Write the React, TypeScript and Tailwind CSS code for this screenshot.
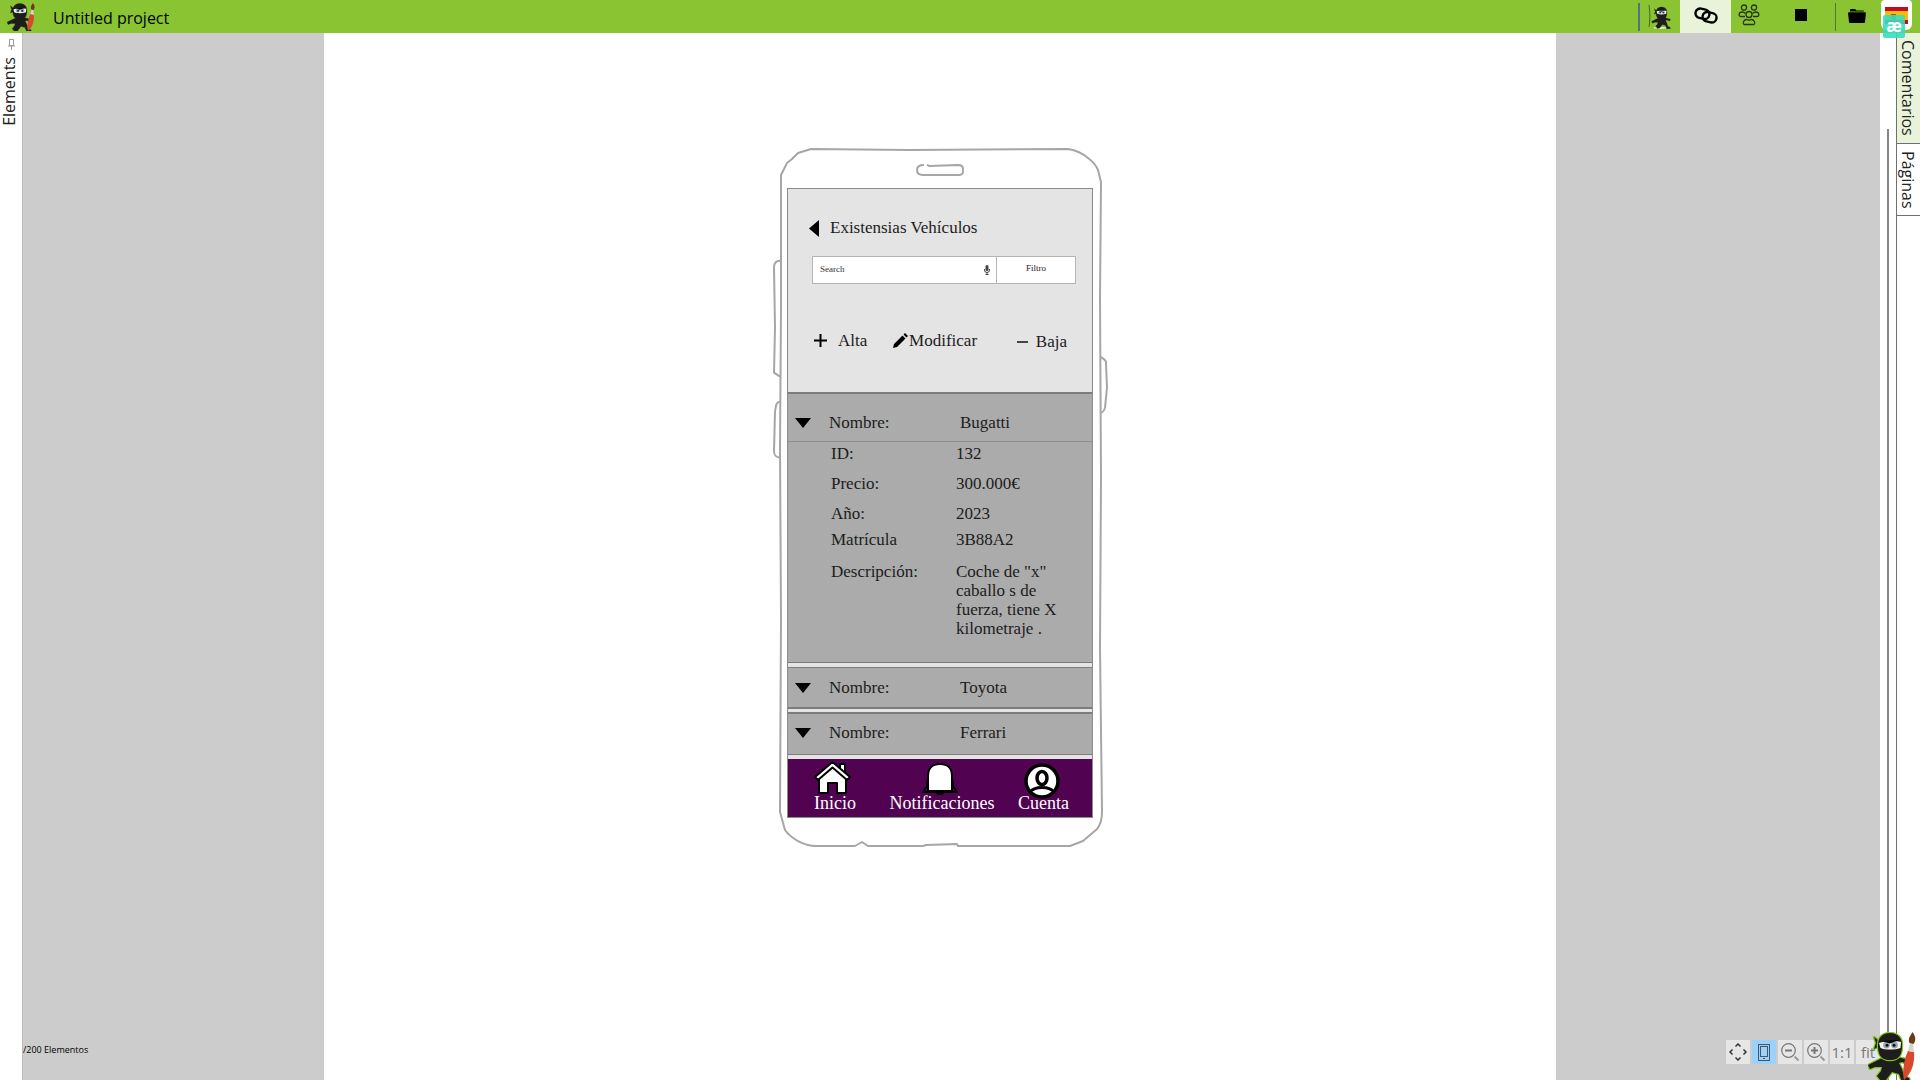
import React from "react";

type NinjaProps = { className?: string; tool: "brush" | "staff"; outline?: boolean };

function Ninja({ className, tool, outline }: NinjaProps) {
  return (
    <svg viewBox="0 0 48 48" className={className} aria-hidden="true">
      {tool === "staff" ? (
        <>
          <path d="M2 2c2 14 2 30 0 42" fill="none" stroke="#4b6a1c" strokeWidth="2" />
          <ellipse cx="24" cy="46" rx="14" ry="1.8" fill="#e3f0c8" />
        </>
      ) : null}
      <g transform={tool === "staff" ? "translate(7 5) scale(.86)" : undefined}>
        <g
          fill="#1d1d1b"
          stroke={outline ? "#7fc31c" : "#1d1d1b"}
          strokeWidth={outline ? 2.4 : 0.6}
          strokeLinejoin="round"
          style={{ paintOrder: "stroke" }}
        >
          <path d="M11 9 6 5l2 6-2 6 6-3z" />
          <path d="M14 26 6 30 0 33l2 4 5-2 7 0-1 4-4 5 4 5 5-1 6-8 7 2 3 8 8-1-1-3-5-2-2-7-3-6 3-1 6 2 2-4-9-2-6-2z" />
          <path d="M22 1c8 0 12 5 12 12s-1 15-12 15S10 20 10 13 14 1 22 1z" />
        </g>
        <path d="M11 11c5-2 15-3 22-1l-.5 6c-6 2-15 2-20 0z" fill="#f7f3ea" />
        <circle cx="18.500" cy="13" r="3.400" fill="#8fa8b8" />
        <circle cx="26.500" cy="13" r="3.400" fill="#8fa8b8" />
        <circle cx="19" cy="13.300" r="1.500" fill="#111" />
        <circle cx="26" cy="13.300" r="1.500" fill="#111" />
        <path d="m14 9 8 2.500L31 8z" />
      </g>
      {tool === "brush" ? (
        <>
          <path d="M36 48c-2-8 0-21 4-29l6 1c1 10-2 21-10 28z" fill="#d9482b" />
          <path d="M40 19l2-8 3 1 1 8z" fill="#d8d4cc" />
          <path d="M41.500 11c-2-5 1-7 3-11 3 4 4 8 1 12z" fill="#6b3a16" />
        </>
      ) : null}
    </svg>
  );
}

function LinkIcon() {
  return (
    <svg viewBox="0 0 24 17" className="h-[17px] w-6" fill="none" stroke="#000" strokeWidth="2.400" aria-hidden="true">
      <rect x="1.500" y="2" width="14" height="9.500" rx="4.750" transform="rotate(12 8.500 6.500)" />
      <rect x="8.500" y="5.500" width="14" height="9.500" rx="4.750" transform="rotate(12 15.500 10.500)" />
    </svg>
  );
}

function PeopleIcon() {
  return (
    <svg viewBox="0 0 22 22" className="size-[22px]" fill="none" stroke="#23360a" strokeWidth="1.300" aria-hidden="true">
      <circle cx="6" cy="3.600" r="2.600" />
      <circle cx="16" cy="3.600" r="2.600" />
      <circle cx="11" cy="10.500" r="3" />
      <path d="M7 12.500H2.500C.5 12.500.5 8 4 8c1.500 0 2.500.5 3.500 1.500M15 12.500h4.500c2 0 2-4.500-1.500-4.500-1.500 0-2.500.5-3.500 1.500" />
      <path d="M6 20.500c-2-1.500 0-5 2.500-5 1 .8 4 .8 5 0 2.500 0 4.500 3.500 2.500 5z" />
    </svg>
  );
}

function PhoneFrame() {
  return (
    <svg
      viewBox="0 0 320 700"
      preserveAspectRatio="none"
      className="absolute inset-0 size-full overflow-visible"
      fill="none"
      stroke="#a6a6a6"
      strokeWidth="2"
      strokeLinejoin="round"
      aria-hidden="true"
    >
      <path d="M1 27 7 15 12 11 18 5 31 1 130 2 288 1Q300 3 308 10 315 15 318 22L321 34 320 150 321 330 320 500 322 665Q322 676 317 682L303 694 290 699 178 699 177 697 146 698 143 699 88 699 82 695 75 699 35 699Q25 698 18 694 9 689 5 683L0 665 1 470 0 300 1 160Z" />
      <path d="M144 17c-4 0-7 1-7 5s2 5 6 5h36c4 0 4-2 4-6 0-3-2-4-5-4l-29 1-2-1" />
      <path d="M0 113c-4 0-6 3-6 7l1 60-1 45 6 4" />
      <path d="M0 254c-4 0-4 4-5 10l-1 40c0 4 3 6 6 6" />
      <path d="M320 209c3 2 7 3 6 7l1 24-2 20c-1 4-2 5-5 5" />
    </svg>
  );
}

function DownTriangle() {
  return (
    <svg viewBox="0 0 16 10" className="mt-[5px] h-2.5 w-4" aria-hidden="true">
      <path d="M0 0h16L8 10z" />
    </svg>
  );
}

function VehicleHeader({ name }: { name: string }) {
  return (
    <button type="button" className="grid w-full grid-cols-[34px_131px_1fr] pl-[7px] text-left leading-5">
      <DownTriangle />
      <span>Nombre:</span>
      <span>{name}</span>
    </button>
  );
}

const details = [
  { label: "ID:", value: "132", space: "pb-2.5" },
  { label: "Precio:", value: "300.000€", space: "pb-2.5" },
  { label: "Año:", value: "2023", space: "pb-1.5" },
  { label: "Matrícula", value: "3B88A2", space: "pb-3" },
  { label: "Descripción:", value: 'Coche de "x" caballo s de fuerza, tiene X kilometraje .', space: "pb-0" },
];

function HouseIcon() {
  return (
    <svg viewBox="0 0 37 33" className="h-[33px] w-[37px]" fill="#fff" stroke="#000" strokeWidth="2" strokeLinejoin="round" aria-hidden="true">
      <path d="M26 3h5v10l-5-5z" />
      <path d="M5 16v16h9V22h9v10h9V16L18.500 4z" />
      <path d="M18.500 1 1 16l3 3L18.500 6.500 33 19l3-3z" />
    </svg>
  );
}

function BellIcon() {
  return (
    <svg viewBox="0 0 36 34" className="mt-0.5 mr-1 h-[34px] w-9" stroke="#000" strokeWidth="2" strokeLinejoin="round" aria-hidden="true">
      <path d="M14 29a4.500 4 0 0 0 8 0z" fill="#555" />
      <path d="M6 14 5 23 1 29h34l-4-6-1-9z" fill="#510352" />
      <path d="M6 28V13C6 5 11 1 18 1s12 4 12 12v15z" fill="#fff" />
    </svg>
  );
}

function AccountIcon() {
  return (
    <svg viewBox="0 0 36 36" className="mt-0.5 mr-1 size-9" fill="#fff" stroke="#000" strokeWidth="3.500" aria-hidden="true">
      <circle cx="18" cy="18" r="16" />
      <ellipse cx="18" cy="15" rx="5" ry="6.500" />
      <path d="M6 29c5-6 19-6 24 0" strokeWidth="3" />
    </svg>
  );
}

function PhoneMockup() {
  return (
    <div className="relative w-80 px-[7px] pt-10 pb-[29px]">
      <PhoneFrame />
      <div className="relative border border-[#8c8c8c] bg-[#e4e4e4] font-['Liberation_Serif',serif] text-[17px] text-[#1c1c1c]">
        <section className="h-[203px] pt-[29px]">
          <div className="flex items-center pl-[21px] leading-5">
            <button type="button" aria-label="Volver" className="w-[21px]">
              <svg viewBox="0 0 10 17" className="h-[17px] w-2.5" aria-hidden="true">
                <path d="M10 0v17L0 8.500z" fill="#000" />
              </svg>
            </button>
            <h1>Existensias Vehículos</h1>
          </div>
          <form className="mt-[18px] mr-4 ml-6 flex h-7 border border-[#b5b5b5] bg-white text-[9px]">
            <div className="flex flex-1 items-center pr-1.5 pl-[7px]">
              <input
                type="text"
                aria-label="Search"
                placeholder="Search"
                className="w-full min-w-0 flex-1 outline-none placeholder:text-[#333]"
              />
              <svg viewBox="0 0 6 10" className="h-2.5 w-1.5" aria-hidden="true">
                <rect x="1.500" width="3" height="6" rx="1.500" fill="#444" />
                <path d="M.5 4v1a2.500 2.500 0 0 0 5 0V4M3 7.500V10M1.500 9.500h3" fill="none" stroke="#444" />
              </svg>
            </div>
            <button type="button" className="w-[79px] border-l border-[#b5b5b5] pb-0.5">Filtro</button>
          </form>
          <div className="mt-[45px] flex items-center justify-between pr-[25px] pl-[26px] leading-5">
            <button type="button" className="flex items-center gap-[11px]">
              <svg viewBox="0 0 13 13" className="size-[13px]" aria-hidden="true">
                <path d="M6.500 0v13M0 6.500h13" stroke="#000" strokeWidth="2" />
              </svg>
              Alta
            </button>
            <button type="button" className="mr-3.5 flex items-center gap-px">
              <svg viewBox="0 0 15 15" className="size-[15px]" aria-hidden="true">
                <path d="m0 15 1-4L9.500 2.500l3 3L4 14zM10.500 1.500 12 0l3 3-1.500 1.500z" />
              </svg>
              Modificar
            </button>
            <button type="button" className="flex items-center gap-2 pt-[3px]">
              <svg viewBox="0 0 11 2" className="h-0.5 w-[11px]" aria-hidden="true">
                <path d="M0 1h11" stroke="#444" strokeWidth="2" />
              </svg>
              Baja
            </button>
          </div>
        </section>
        <section className="border-t-2 border-b border-[#7c7c7c] bg-[#ababab]">
          <div className="border-b border-[#8f8f8f] pt-[19px] pb-2">
            <VehicleHeader name="Bugatti" />
          </div>
          <dl className="pt-px pb-6 pl-[43px]">
            {details.map((d) => (
              <div key={d.label} className={"grid grid-cols-[125px_110px] leading-[19px] " + d.space}>
                <dt className="pt-px">{d.label}</dt>
                <dd className="pt-px">{d.value}</dd>
              </div>
            ))}
          </dl>
        </section>
        <section className="mt-1 flex h-[42px] items-center border-t border-b-2 border-[#7c7c7c] bg-[#ababab]">
          <VehicleHeader name="Toyota" />
        </section>
        <section className="mt-[3px] flex h-[43px] items-center border-t-2 border-b border-[#7c7c7c] bg-[#ababab] pb-0.5">
          <VehicleHeader name="Ferrari" />
        </section>
        <nav className="mt-1 -mb-px flex justify-between border-b border-[#8c8c8c] bg-[#510352] pt-0.5 pr-[23px] pb-1 pl-[26px] text-lg leading-5 text-white">
          <a href="#inicio" className="flex flex-col">
            <HouseIcon />
            <span className="relative -mt-px">Inicio</span>
          </a>
          <a href="#notificaciones" className="ml-2.5 flex flex-col items-center">
            <BellIcon />
            <span className="relative -mt-1">Notificaciones</span>
          </a>
          <a href="#cuenta" className="flex flex-col items-center">
            <AccountIcon />
            <span className="relative -mt-1.5">Cuenta</span>
          </a>
        </nav>
      </div>
    </div>
  );
}

function Header() {
  return (
    <header className="flex h-[33px] shrink-0 items-center bg-[#8ac433] pl-[7px]">
      <Ninja tool="brush" className="size-7" />
      <span className="ml-[18px] flex-1 pt-0.5 text-base leading-6">Untitled project</span>
      <span className="h-7 w-0.5 bg-[#4f7680]" />
      <button type="button" aria-label="Ninja" className="flex w-10 justify-center">
        <Ninja tool="staff" className="size-[25px]" />
      </button>
      <button type="button" aria-label="Enlaces" className="flex h-full w-[51px] items-center justify-center bg-[#e8f3da] pb-0.5">
        <LinkIcon />
      </button>
      <button type="button" aria-label="Equipo" className="flex w-9 justify-center pb-1">
        <PeopleIcon />
      </button>
      <button type="button" aria-label="Detener" className="flex h-full w-[68px] items-center justify-center pb-[3px]">
        <span className="size-3 bg-black" />
      </button>
      <span className="h-7 w-px bg-[#4f7a30]" />
      <button type="button" aria-label="Abrir" className="flex w-[45px] justify-center pr-[3px] pb-0.5">
        <svg viewBox="0 0 18 14" className="h-3.5 w-[18px]" aria-hidden="true">
          <path d="M2 2.500V1q0-1 1-1h4l1.500 1.500H15q1 0 1 1zM0 4q0-.8 1-.8h16q1 0 .9.800L17 13q0 1-1 1H2q-1 0-1-1z" />
        </svg>
      </button>
      <button type="button" aria-label="Idioma" className="relative z-10 mr-2 flex h-[30px] w-[31px] justify-center self-start rounded-b-md rounded-t-sm bg-white pt-[7px]">
        <svg viewBox="0 0 23 17" className="h-[17px] w-[23px]" aria-hidden="true">
          <path d="M0 0h23v17H0z" fill="#f8bd00" />
          <path d="M0 0h23v4H0zM0 13h23v4H0z" fill="#c60b1e" />
          <path d="M6 7h5v6H6z" fill="#a05a28" />
        </svg>
        <span className="absolute top-[15px] left-0.5 flex h-[23px] w-[22px] items-center justify-center rounded-xs bg-[#38dcc0]/90 pb-0.5 font-['Open_Sans',sans-serif] text-[17px] leading-5 font-bold text-white">
          æ
        </span>
      </button>
    </header>
  );
}

function Magnifier({ plus }: { plus?: boolean }) {
  return (
    <svg viewBox="0 0 18 18" className="size-[18px]" fill="none" stroke="#777" aria-hidden="true">
      <circle cx="7.500" cy="7.500" r="6.800" strokeWidth="1.200" />
      <path d="M4 7.500h7" strokeWidth="2" />
      {plus ? <path d="M7.500 4v7" strokeWidth="2" /> : null}
      <path d="m13.500 13.500 4 4" strokeWidth="2" stroke="#999" />
    </svg>
  );
}

const zoomButton = "flex size-6 items-center justify-center bg-[#e6e6e6]";

function ZoomBar() {
  return (
    <div className="absolute right-0 bottom-4 flex gap-0.5 text-[15px] leading-5 text-[#777]">
      <button type="button" aria-label="Centrar" className={zoomButton}>
        <svg viewBox="0 0 18 18" className="size-[18px]" fill="none" stroke="#333" strokeWidth="1.500" aria-hidden="true">
          <path d="m6.500 3.500 2.500-2.500 2.500 2.500M6.500 14.500 9 17l2.500-2.500M3.500 6.500 1 9l2.500 2.500M14.500 6.500 17 9l-2.500 2.500" />
        </svg>
      </button>
      <button type="button" aria-label="Dispositivo" className="flex size-6 items-center justify-center bg-[#9bd1fb]">
        <svg viewBox="0 0 12 17" className="h-[17px] w-3" fill="none" stroke="#456" aria-hidden="true">
          <rect x=".5" y=".5" width="11" height="16" />
          <rect x="2.500" y="2.500" width="7" height="10" />
          <path d="M5 14.500h2" />
        </svg>
      </button>
      <button type="button" aria-label="Alejar" className={zoomButton}>
        <Magnifier />
      </button>
      <button type="button" aria-label="Acercar" className={zoomButton}>
        <Magnifier plus />
      </button>
      <button type="button" className={zoomButton}>1:1</button>
      <button type="button" className={zoomButton}>fit</button>
    </div>
  );
}

export default function App() {
  return (
    <div className="flex min-h-screen flex-col bg-white font-['Open_Sans','Noto_Sans',sans-serif] text-black">
      <Header />
      <div className="relative flex flex-1">
        <aside className="flex w-[23px] flex-col items-center border-r border-[#bdbdbd] pt-1.5">
          <svg viewBox="0 0 7 11" className="h-[11px] w-[7px]" fill="none" stroke="#999" aria-hidden="true">
            <path d="M1.500.5h4v6h-4zM0 7h7M3.500 7v4" />
          </svg>
          <button type="button" className="mt-[7px] mr-1">
            <span className="block rotate-180 text-base leading-5 text-[#222] [writing-mode:vertical-rl]">Elements</span>
          </button>
        </aside>
        <main className="relative grid flex-1 grid-cols-[301fr_1232fr_324fr] bg-[#cccccc]">
          <div className="col-start-2 flex items-start justify-center bg-white pt-[115px]">
            <PhoneMockup />
          </div>
          <p className="absolute bottom-6 left-0 text-[9px] leading-3">/200 Elementos</p>
          <ZoomBar />
        </main>
        <aside className="flex w-10">
          <div className="flex w-4 justify-center pt-24">
            <div className="w-0.5 bg-[#858585]" />
          </div>
          <div className="flex w-6 flex-col border-l border-[#707070] text-base leading-[22px] text-[#222]">
            <button type="button" className="border-b border-[#707070] bg-[#e8f3da] py-[7px]">
              <span className="block [writing-mode:vertical-rl]">Comentarios</span>
            </button>
            <button type="button" className="border-b border-[#707070] py-[7px]">
              <span className="block [writing-mode:vertical-rl]">Páginas</span>
            </button>
          </div>
        </aside>
        <button type="button" aria-label="Ayuda" className="absolute right-1 bottom-0">
          <Ninja tool="brush" outline className="size-12" />
        </button>
      </div>
    </div>
  );
}
